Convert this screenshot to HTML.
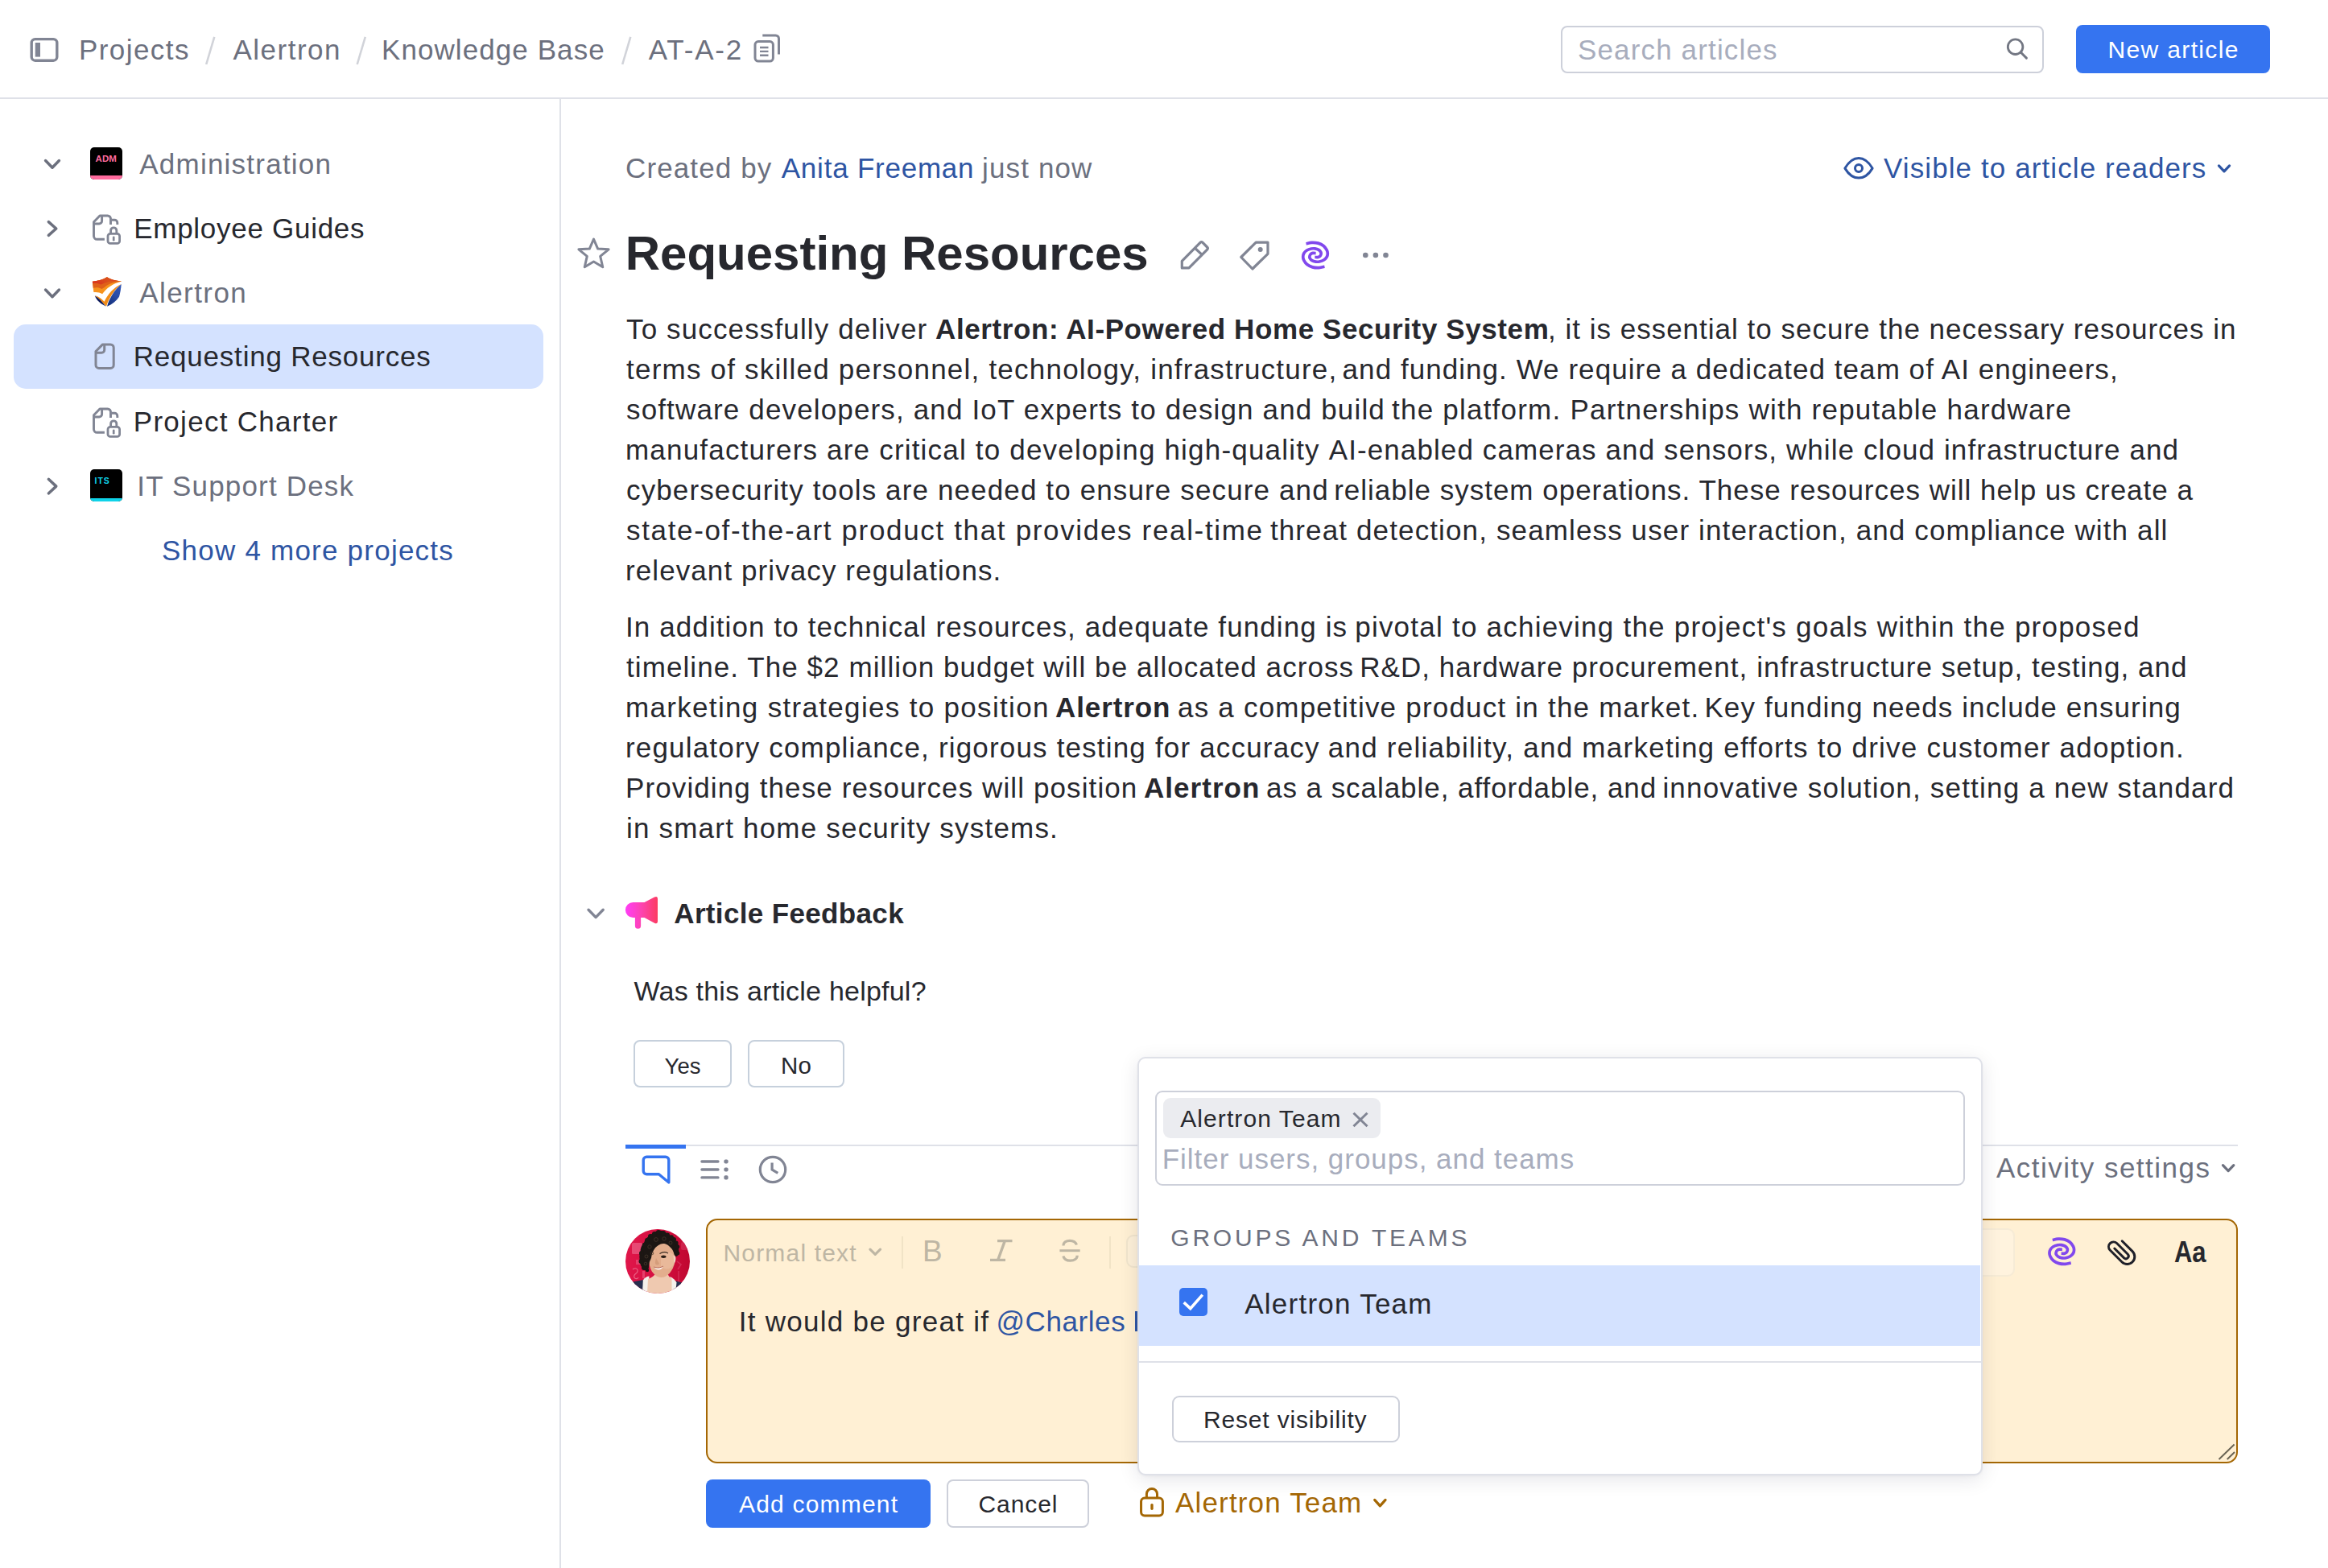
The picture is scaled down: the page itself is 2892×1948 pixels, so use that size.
<!DOCTYPE html>
<html lang="en"><head><meta charset="utf-8"><title>Requesting Resources</title><style>
html,body{margin:0;padding:0;background:#fff}
html{overflow:hidden}
body{width:2892px;height:1948px;position:relative;overflow:hidden;font-family:'Liberation Sans',sans-serif}
.t{position:absolute;white-space:nowrap;line-height:140px;height:140px;display:block}
.b{position:absolute;box-sizing:border-box}
svg{position:absolute;left:0;top:0;overflow:visible;pointer-events:none}
</style></head><body><div class="b" style="left:0px;top:121px;width:2892px;height:2px;background:#dfe1e8"></div>
<div class="b" style="left:695px;top:123px;width:2px;height:1825px;background:#dfe1e8"></div>
<div class="b" style="left:1939px;top:32px;width:600px;height:59px;border:2px solid #cdd0da;border-radius:8px;background:#fff"></div>
<div class="b" style="left:2579px;top:31px;width:241px;height:60px;background:#3574f0;border-radius:8px"></div>
<div class="b" style="left:17px;top:403px;width:658px;height:80px;background:#d4e2ff;border-radius:15px"></div>
<div class="b" style="left:112px;top:183px;width:40px;height:40px;background:#000;border-radius:5px;overflow:hidden"><div class="b" style="left:0px;top:35px;width:40px;height:6px;background:#ff6b9d"></div></div>
<div class="b" style="left:112px;top:583px;width:40px;height:40px;background:#000;border-radius:5px;overflow:hidden"><div class="b" style="left:0px;top:35.5px;width:40px;height:6px;background:#0fd3e9"></div></div>
<div class="b" style="left:787px;top:1292px;width:122px;height:59px;border:2px solid #c6d0dc;border-radius:8px;background:#fff"></div>
<div class="b" style="left:929px;top:1292px;width:120px;height:59px;border:2px solid #c6d0dc;border-radius:8px;background:#fff"></div>
<div class="b" style="left:777px;top:1422px;width:2003px;height:2px;background:#dfe1e8"></div>
<div class="b" style="left:777px;top:1422px;width:75px;height:5px;background:#3574f0"></div>
<div class="b" style="left:877px;top:1514px;width:1903px;height:304px;border:2px solid #a46704;border-radius:14px;background:#fff0d4"></div>
<div class="b" style="left:1120px;top:1536px;width:2px;height:40px;background:#f1e3c6"></div>
<div class="b" style="left:1378px;top:1536px;width:2px;height:40px;background:#f1e3c6"></div>
<div class="b" style="left:1399.4px;top:1534px;width:60px;height:41px;border:2px solid #f1e5cd;border-radius:9px;background:#fdf0d8"></div>
<div class="b" style="left:2300px;top:1526px;width:203px;height:59.5px;border:2px solid #f6ebd6;border-radius:9px;background:#fff3de"></div>
<div class="b" style="left:1409.5px;top:1628.5px;width:4px;height:25.5px;background:#2e55a3"></div>
<div class="b" style="left:877px;top:1838px;width:279px;height:60px;background:#3574f0;border-radius:8px"></div>
<div class="b" style="left:1176px;top:1838px;width:177px;height:60px;border:2px solid #cdd0da;border-radius:8px;background:#fff"></div>
<svg width="2892" height="1948" viewBox="0 0 2892 1948"><rect x="39.2" y="48.6" width="31.6" height="26.6" rx="4.5" fill="none" stroke="#818594" stroke-width="3.4"/><rect x="43.75" y="53" width="6.25" height="17.6" fill="#818594"/>
<path d="M266.3 45.8 L256.2 80" fill="none" stroke="#d1d3d9" stroke-width="2.6" stroke-linecap="butt" stroke-linejoin="round" />
<path d="M453.8 45.8 L443.7 80" fill="none" stroke="#d1d3d9" stroke-width="2.6" stroke-linecap="butt" stroke-linejoin="round" />
<path d="M783.3 45.8 L773.2 80" fill="none" stroke="#d1d3d9" stroke-width="2.6" stroke-linecap="butt" stroke-linejoin="round" />
<rect x="938" y="51.6" width="22.4" height="24.4" rx="4" fill="none" stroke="#818594" stroke-width="3"/>
<path d="M947.3 44 H963.5 a4 4 0 0 1 4 4 V67.5" fill="none" stroke="#818594" stroke-width="3" stroke-linecap="butt" stroke-linejoin="round" />
<path d="M944 59 H954.5 M944 63.9 H954.5 M944 68.8 H954.5" fill="none" stroke="#818594" stroke-width="2.4" stroke-linecap="butt" stroke-linejoin="round" />
<circle cx="2503.6" cy="58.2" r="9.3" fill="none" stroke="#737783" stroke-width="2.8"/><path d="M2510.3 65 L2517.4 72.1" fill="none" stroke="#737783" stroke-width="3" stroke-linecap="round" stroke-linejoin="round" />
<path d="M56.575 199.575 L65.0 208.2675 L73.425 199.575" fill="none" stroke="#6c707e" stroke-width="3.5" stroke-linecap="round" stroke-linejoin="round" />
<path d="M60.325 275.575 L69.7675 284.0 L60.325 292.425" fill="none" stroke="#6c707e" stroke-width="3.5" stroke-linecap="round" stroke-linejoin="round" />
<path d="M56.575 360.075 L65.0 368.7675 L73.425 360.075" fill="none" stroke="#6c707e" stroke-width="3.5" stroke-linecap="round" stroke-linejoin="round" />
<path d="M60.325 595.325 L69.7675 604.125 L60.325 612.925" fill="none" stroke="#6c707e" stroke-width="3.5" stroke-linecap="round" stroke-linejoin="round" />
<g transform="translate(105 255)" ><path d="M24.9 42.3 H15.5 a4 4 0 0 1 -4 -4 V20.7 L19 13 H28.7 a3.8 3.8 0 0 1 3.8 3.8 V23.9" fill="none" stroke="#818594" stroke-width="2.9" stroke-linecap="butt" stroke-linejoin="round" /><path d="M21.6 13 V19.5 a3.5 3.5 0 0 1 -3.5 3.5 H11.5" fill="none" stroke="#818594" stroke-width="2.9" stroke-linecap="butt" stroke-linejoin="round" /><path d="M33.5 18.3 H37.3 a3.5 3.5 0 0 1 3.5 3.5 V23.9" fill="none" stroke="#818594" stroke-width="2.9" stroke-linecap="butt" stroke-linejoin="round" /><rect x="29" y="35.3" width="14.6" height="12.1" rx="3" fill="none" stroke="#818594" stroke-width="2.8"/><path d="M32.6 35.3 V31.4 a3.6 3.6 0 0 1 7.2 0 V35.3" fill="none" stroke="#818594" stroke-width="2.8" stroke-linecap="butt" stroke-linejoin="round" /><path d="M36.2 39.8 V43.2" fill="none" stroke="#818594" stroke-width="2.7" stroke-linecap="round" stroke-linejoin="round" /></g>
<g transform="translate(105 415)" ><path d="M22.5 12.9 H32.2 a4 4 0 0 1 4 4 V38.4 a4 4 0 0 1 -4 4 H18 a4 4 0 0 1 -4 -4 V21.5 Z" fill="none" stroke="#818594" stroke-width="3" stroke-linecap="round" stroke-linejoin="round" /><path d="M24.7 12.9 V19.8 a3.5 3.5 0 0 1 -3.5 3.5 H14" fill="none" stroke="#818594" stroke-width="3" stroke-linecap="butt" stroke-linejoin="round" /></g>
<g transform="translate(105 495)" ><path d="M24.9 42.3 H15.5 a4 4 0 0 1 -4 -4 V20.7 L19 13 H28.7 a3.8 3.8 0 0 1 3.8 3.8 V23.9" fill="none" stroke="#818594" stroke-width="2.9" stroke-linecap="butt" stroke-linejoin="round" /><path d="M21.6 13 V19.5 a3.5 3.5 0 0 1 -3.5 3.5 H11.5" fill="none" stroke="#818594" stroke-width="2.9" stroke-linecap="butt" stroke-linejoin="round" /><path d="M33.5 18.3 H37.3 a3.5 3.5 0 0 1 3.5 3.5 V23.9" fill="none" stroke="#818594" stroke-width="2.9" stroke-linecap="butt" stroke-linejoin="round" /><rect x="29" y="35.3" width="14.6" height="12.1" rx="3" fill="none" stroke="#818594" stroke-width="2.8"/><path d="M32.6 35.3 V31.4 a3.6 3.6 0 0 1 7.2 0 V35.3" fill="none" stroke="#818594" stroke-width="2.8" stroke-linecap="butt" stroke-linejoin="round" /><path d="M36.2 39.8 V43.2" fill="none" stroke="#818594" stroke-width="2.7" stroke-linecap="round" stroke-linejoin="round" /></g>
<g transform="translate(114.4 344.1)" ><defs><linearGradient id="sgb" x1="0.9" y1="0" x2="0.3" y2="1"><stop offset="0" stop-color="#2f55b5"/><stop offset="0.5" stop-color="#2a4da8"/><stop offset="1" stop-color="#14307c"/></linearGradient>
    <linearGradient id="sgr" x1="0" y1="0.6" x2="1" y2="0.3"><stop offset="0" stop-color="#d9311f"/><stop offset="0.55" stop-color="#d9501c"/><stop offset="1" stop-color="#d93420"/></linearGradient>
    <clipPath id="scl"><path d="M0.3 5.6 C7 5.2 13 3.5 18.5 0.2 C23 3.2 29 4.8 36.6 5.4 C26 8 17.5 14 12.7 21.2 C9.5 19 5.5 18.5 2 19 Z"/></clipPath></defs><g clip-path="url(#scl)"><rect x="0" y="0" width="37" height="22" fill="#f7931d"/><path d="M0 0 H37 V6 C30 5.8 23 8 18.2 10.6 C16 12.5 14 14.2 11.9 14.9 C9 13 5 12.8 1 13.8 Z" fill="#df6119"/><path d="M0 0 H37 V5.2 C30 4.6 23 5.2 15.5 7.4 C13.5 8.4 12 9.2 10.7 9.5 C7.5 7.6 4 7.4 0 8 Z" fill="url(#sgr)"/></g><path d="M3.4 23 C8 24.2 12 27.5 15.2 30.6 C19.5 21 27 13 36.2 8.8 C27 16.5 21 26 17.6 36.6 C13 31.5 8 27 3.4 23 Z" fill="#f08c19"/><path d="M3.4 23.3 C8 26 12.5 30.5 16.8 36.3 C11 33.5 5.5 29 3.4 23.3 Z" fill="#0b185a"/><path d="M36.3 9 C35.8 15 35 20 33.6 24.6 C30 30 25 34 18.6 36.6 C21.5 26.5 27.5 16.5 36.3 9 Z" fill="url(#sgb)"/></g>
<g transform="translate(2280 180)" ><path d="M11.9 29.1 C17 20.5 23 16.6 29 16.6 S41 20.5 46.1 29.1 C41 37.5 35 41.1 29 41.1 S17 37.5 11.9 29.1 Z" fill="none" stroke="#2e55a3" stroke-width="3" stroke-linecap="round" stroke-linejoin="round" /><circle cx="29" cy="28.9" r="4.5" fill="none" stroke="#2e55a3" stroke-width="3"/></g>
<path d="M2756.44 205.94 L2763.0 212.916 L2769.56 205.94" fill="none" stroke="#2e55a3" stroke-width="3.2" stroke-linecap="round" stroke-linejoin="round" />
<g transform="translate(710 288)" ><path d="M27.5 9.1 L32.7 21.1 L46.1 21.8 L35.7 30.4 L38.75 43.75 L27.5 37 L16.25 43.75 L19.3 30.4 L8.9 21.8 L22.3 21.1 Z" fill="none" stroke="#818594" stroke-width="3" stroke-linecap="round" stroke-linejoin="round" /></g>
<g transform="translate(1450 285)" ><path d="M18.3 47.9 H27 L49.6 25.1 a2.2 2.2 0 0 0 0 -3.1 L44.1 16.4 a2.2 2.2 0 0 0 -3.1 0 L18.3 39.3 Z M35.8 24.5 L42.3 30.7" fill="none" stroke="#818594" stroke-width="3.2" stroke-linecap="round" stroke-linejoin="round" /></g>
<g transform="translate(1450 285)" ><path d="M110.2 16.1 H125 V30.3 L105.9 49 L91.75 34.5 Z" fill="none" stroke="#818594" stroke-width="3.2" stroke-linecap="round" stroke-linejoin="round" /><circle cx="115.7" cy="24.9" r="3" fill="#818594"/></g>
<g transform="translate(1634 317)" ><path d="M-11.48 -14.23 C-10.31 -14.46 -6.94 -15.51 -4.44 -15.61 C-1.94 -15.71 1.07 -15.53 3.52 -14.85 C5.97 -14.16 8.47 -12.91 10.25 -11.48 C12.04 -10.05 13.39 -7.86 14.23 -6.27 C15.07 -4.69 15.30 -3.42 15.30 -1.99 C15.30 -0.56 15.02 0.97 14.23 2.30 C13.44 3.62 12.09 5.02 10.56 5.97 C9.03 6.91 6.73 7.60 5.05 7.96 C3.37 8.32 1.99 8.34 0.46 8.11 C-1.07 7.88 -2.91 7.35 -4.13 6.58 C-5.36 5.82 -6.40 4.44 -6.89 3.52 C-7.37 2.60 -7.24 1.89 -7.04 1.07 C-6.84 0.26 -6.35 -0.77 -5.66 -1.38 C-4.97 -1.99 -3.95 -2.42 -2.91 -2.60 C-1.86 -2.78 0.03 -2.47 0.61 -2.45" fill="none" stroke="#8148ed" stroke-width="3.7" stroke-linecap="butt" stroke-linejoin="round" /><g transform="rotate(180)"><path d="M-11.48 -14.23 C-10.31 -14.46 -6.94 -15.51 -4.44 -15.61 C-1.94 -15.71 1.07 -15.53 3.52 -14.85 C5.97 -14.16 8.47 -12.91 10.25 -11.48 C12.04 -10.05 13.39 -7.86 14.23 -6.27 C15.07 -4.69 15.30 -3.42 15.30 -1.99 C15.30 -0.56 15.02 0.97 14.23 2.30 C13.44 3.62 12.09 5.02 10.56 5.97 C9.03 6.91 6.73 7.60 5.05 7.96 C3.37 8.32 1.99 8.34 0.46 8.11 C-1.07 7.88 -2.91 7.35 -4.13 6.58 C-5.36 5.82 -6.40 4.44 -6.89 3.52 C-7.37 2.60 -7.24 1.89 -7.04 1.07 C-6.84 0.26 -6.35 -0.77 -5.66 -1.38 C-4.97 -1.99 -3.95 -2.42 -2.91 -2.60 C-1.86 -2.78 0.03 -2.47 0.61 -2.45" fill="none" stroke="#8148ed" stroke-width="3.7" stroke-linecap="butt" stroke-linejoin="round" /></g></g>
<circle cx="1696.3" cy="317" r="3.3" fill="#818594"/>
<circle cx="1708.9" cy="317" r="3.3" fill="#818594"/>
<circle cx="1721.5" cy="317" r="3.3" fill="#818594"/>
<path d="M731.03 1130.28 L740.125 1139.567 L749.22 1130.28" fill="none" stroke="#818594" stroke-width="3.4" stroke-linecap="round" stroke-linejoin="round" />
<defs><linearGradient id="mg" x1="0" y1="0" x2="1" y2="0"><stop offset="0" stop-color="#ff3df7"/><stop offset="0.5" stop-color="#fd43b0"/><stop offset="1" stop-color="#fc3c62"/></linearGradient></defs>
<g transform="translate(768 1104)" ><path d="M18.4 17 H32.5 L45 10.6 Q49 8.8 49 13 V40.3 Q49 44.5 45 42.7 L32.5 36 H28.1 V46.2 a3.6 3.6 0 0 1 -7.2 0 V36 H18.4 A9.5 9.5 0 0 1 18.4 17 Z" fill="url(#mg)"/></g>
<path d="M803.25 1437.2 H826.8 a4 4 0 0 1 4 4 V1469 L818.4 1458.8 H803.25 a4 4 0 0 1 -4 -4 V1441.2 a4 4 0 0 1 4 -4 Z" fill="none" stroke="#3574f0" stroke-width="3.4" stroke-linecap="round" stroke-linejoin="round" />
<path d="M871.9 1443 H892 M871.9 1453 H892 M871.9 1462.9 H892" fill="none" stroke="#818594" stroke-width="3.3" stroke-linecap="round" stroke-linejoin="round" />
<rect x="899.4" y="1440.4" width="5.2" height="5.2" rx="1.8" fill="#818594"/>
<rect x="899.4" y="1450.4" width="5.2" height="5.2" rx="1.8" fill="#818594"/>
<rect x="899.4" y="1460.3000000000002" width="5.2" height="5.2" rx="1.8" fill="#818594"/>
<circle cx="960" cy="1453" r="15.7" fill="none" stroke="#818594" stroke-width="3.2"/><path d="M959.1 1444.4 V1453 L966.3 1457.3" fill="none" stroke="#818594" stroke-width="3.2" stroke-linecap="butt" stroke-linejoin="miter" />
<path d="M2761.44 1447.69 L2768.125 1454.666 L2774.81 1447.69" fill="none" stroke="#6c707e" stroke-width="3.2" stroke-linecap="round" stroke-linejoin="round" />
<g transform="translate(777 1527)" ><defs><clipPath id="avc"><circle cx="40" cy="40" r="40"/></clipPath><linearGradient id="avbg" x1="0" y1="0" x2="1" y2="0"><stop offset="0" stop-color="#e0164a"/><stop offset="0.6" stop-color="#d30d3e"/><stop offset="1" stop-color="#bf0830"/></linearGradient></defs><g clip-path="url(#avc)"><rect x="0" y="0" width="80" height="80" fill="url(#avbg)"/><rect x="8" y="17" width="13" height="14" rx="1.5" fill="#e9537c" opacity="0.85"/><rect x="13" y="38" width="6" height="6" fill="#e65179" opacity="0.7"/><path d="M9 50 C14 46 18 52 12 56 C8 60 14 64 16 60" fill="none" stroke="#ee7a98" stroke-width="1.1" opacity="0.8"/><rect x="21" y="52" width="3" height="9" fill="#e9537c" opacity="0.7"/><rect x="69" y="16" width="8" height="10" rx="2" fill="#cf2a52" opacity="0.8"/><path d="M64 40 l5 4 l-4 6 M66 52 v14" stroke="#d6345c" stroke-width="1.6" fill="none" opacity="0.8"/><path d="M6 66 L22 63 L24 80 L0 80 Z" fill="#27304f"/><path d="M63 64.5 L72 67 L80 80 L58 80 Z" fill="#27304f"/><path d="M21.8 63.5 C24 60 27 58.8 29.5 58.6 L28 80 L21 80 Z" fill="#f4f1ec"/><path d="M55.5 59 C59 60.5 62 63.5 63.5 66.5 L62 80 L56.5 80 Z" fill="#f4f1ec"/><path d="M28 62 C33 60 36 58 38 54 L52 54 C53 58 55 60 57.5 61.5 L57.5 80 L27 80 Z" fill="#efc9b0"/><path d="M30 30 C34 18 46 12 57 17 C61 24 62.5 34 61.5 40 C60.5 46 58 51 55 54.5 C52 58 48.5 60 44.5 60 C39 60 34.5 56 31.5 50 C29 44 28.5 36 30 30 Z" fill="#e3ae8d"/><path d="M44 30 C50 27 56 28 60 32 C61 36 61 40 60 44 C56 50 50 52 44 46 Z" fill="#ebbd9f" opacity="0.7"/><path d="M59.5 33 C63 32 63.5 38 60.5 43 Z" fill="#f0d2c0"/><ellipse cx="47.3" cy="34.3" rx="3.2" ry="1.7" fill="#2b1d15"/><path d="M42.5 30.5 C46 28.3 50 28.3 53 30" stroke="#3a2a20" stroke-width="1.1" fill="none"/><path d="M38 36 C37 40 36 43 38.5 44.2 C40 44.6 41.5 44 42 43" fill="#cf9877" opacity="0.8"/><path d="M35.5 47.3 C39 48.8 43 48.6 46.6 46.4 C45 51.2 38.5 52.2 35.5 47.3 Z" fill="#fdf6f2"/><path d="M35.2 47 C39 48.6 43 48.4 47 46" stroke="#a8564a" stroke-width="0.8" fill="none"/><path d="M41 2 C46 1 50 4 53.7 6.7 C58 8.5 61 11 62 14.3 C65 17 66.3 20 65.8 23.3 C66.8 27 66.3 30 65 32.5 C63.5 35 62 34 60.5 31.5 C59.5 27 58 25 56.3 23.3 C54 20.5 52 19 49.2 18.2 C46 17.6 43.5 18.3 41 20 C38 21.8 36 24 34.6 27 C33 30 32.5 32.5 32.2 35 C31.5 37.5 30.5 39 29.8 41 C29.3 43.5 29.2 45.5 29 47.5 C28.5 50 27.2 51.5 25.6 51.3 C22.5 51.5 21 50 20.5 47.5 C18.5 45 17.8 42 18 38.6 C16.8 35 17.3 31.5 18.6 28.4 C18.2 24 20 20 23 17 C24 12.5 27 9.5 30.7 8 C33.5 4.5 37 2.6 41 2 Z" fill="#1c1613"/><circle cx="24" cy="20" r="3.2" fill="#1c1613"/><circle cx="20" cy="30" r="3" fill="#1c1613"/><circle cx="19.5" cy="40" r="3" fill="#1c1613"/><circle cx="23" cy="48" r="3" fill="#1c1613"/><circle cx="31" cy="9" r="3" fill="#1c1613"/><circle cx="41" cy="4" r="3" fill="#1c1613"/><circle cx="52" cy="7.5" r="3" fill="#1c1613"/><circle cx="60" cy="13" r="3" fill="#1c1613"/><circle cx="64.5" cy="22" r="2.8" fill="#1c1613"/><circle cx="65" cy="30" r="2.4" fill="#1c1613"/><circle cx="27" cy="14" r="3" fill="#1c1613"/><circle cx="36" cy="6" r="3" fill="#1c1613"/><circle cx="47" cy="5" r="3" fill="#1c1613"/><circle cx="57" cy="10" r="2.8" fill="#1c1613"/><circle cx="63" cy="17" r="2.6" fill="#1c1613"/><circle cx="27" cy="51" r="2.2" fill="#1c1613"/><circle cx="30" cy="22" r="2.2" fill="none" stroke="#4a3a30" stroke-width="0.9" opacity="0.8"/><circle cx="38" cy="13" r="2.4" fill="none" stroke="#4a3a30" stroke-width="0.9" opacity="0.8"/><circle cx="48" cy="12" r="2.2" fill="none" stroke="#4a3a30" stroke-width="0.9" opacity="0.8"/><circle cx="26" cy="34" r="2" fill="none" stroke="#4a3a30" stroke-width="0.9" opacity="0.8"/><circle cx="56" cy="17" r="2" fill="none" stroke="#4a3a30" stroke-width="0.9" opacity="0.8"/><circle cx="33" cy="30" r="1.8" fill="none" stroke="#4a3a30" stroke-width="0.9" opacity="0.8"/><circle cx="25" cy="43" r="1.8" fill="none" stroke="#4a3a30" stroke-width="0.9" opacity="0.8"/></g></g>
<path d="M1080.94 1552.19 L1087.25 1558.416 L1093.56 1552.19" fill="none" stroke="#beb6a4" stroke-width="3.2" stroke-linecap="round" stroke-linejoin="round" />
<path d="M1239 1541.6 H1257.5 M1230 1565.4 H1249 M1248.3 1541.6 L1239.7 1565.4" fill="none" stroke="#beb6a4" stroke-width="3.4" stroke-linecap="butt" stroke-linejoin="round" />
<path d="M1337.5 1546.5 C1336 1542.5 1332.5 1541.3 1329 1541.3 C1324.5 1541.3 1321 1543.5 1321 1547.5 M1320.8 1560.5 C1322 1564.5 1325.5 1566.2 1329.5 1566.2 C1334.5 1566.2 1338.2 1563.8 1338.2 1559.8" fill="none" stroke="#beb6a4" stroke-width="3.2" stroke-linecap="butt" stroke-linejoin="round" /><path d="M1316.4 1553.7 H1341.7" fill="none" stroke="#beb6a4" stroke-width="3" stroke-linecap="butt" stroke-linejoin="round" />
<g transform="translate(2561.25 1554.75)" ><path d="M-11.48 -14.23 C-10.31 -14.46 -6.94 -15.51 -4.44 -15.61 C-1.94 -15.71 1.07 -15.53 3.52 -14.85 C5.97 -14.16 8.47 -12.91 10.25 -11.48 C12.04 -10.05 13.39 -7.86 14.23 -6.27 C15.07 -4.69 15.30 -3.42 15.30 -1.99 C15.30 -0.56 15.02 0.97 14.23 2.30 C13.44 3.62 12.09 5.02 10.56 5.97 C9.03 6.91 6.73 7.60 5.05 7.96 C3.37 8.32 1.99 8.34 0.46 8.11 C-1.07 7.88 -2.91 7.35 -4.13 6.58 C-5.36 5.82 -6.40 4.44 -6.89 3.52 C-7.37 2.60 -7.24 1.89 -7.04 1.07 C-6.84 0.26 -6.35 -0.77 -5.66 -1.38 C-4.97 -1.99 -3.95 -2.42 -2.91 -2.60 C-1.86 -2.78 0.03 -2.47 0.61 -2.45" fill="none" stroke="#8148ed" stroke-width="3.7" stroke-linecap="butt" stroke-linejoin="round" /><g transform="rotate(180)"><path d="M-11.48 -14.23 C-10.31 -14.46 -6.94 -15.51 -4.44 -15.61 C-1.94 -15.71 1.07 -15.53 3.52 -14.85 C5.97 -14.16 8.47 -12.91 10.25 -11.48 C12.04 -10.05 13.39 -7.86 14.23 -6.27 C15.07 -4.69 15.30 -3.42 15.30 -1.99 C15.30 -0.56 15.02 0.97 14.23 2.30 C13.44 3.62 12.09 5.02 10.56 5.97 C9.03 6.91 6.73 7.60 5.05 7.96 C3.37 8.32 1.99 8.34 0.46 8.11 C-1.07 7.88 -2.91 7.35 -4.13 6.58 C-5.36 5.82 -6.40 4.44 -6.89 3.52 C-7.37 2.60 -7.24 1.89 -7.04 1.07 C-6.84 0.26 -6.35 -0.77 -5.66 -1.38 C-4.97 -1.99 -3.95 -2.42 -2.91 -2.60 C-1.86 -2.78 0.03 -2.47 0.61 -2.45" fill="none" stroke="#8148ed" stroke-width="3.7" stroke-linecap="butt" stroke-linejoin="round" /></g></g>
<g transform="translate(2606 1526)" ><path d="M30.18 15.72 L43.08 28.62 A9.3 9.3 0 0 1 29.92 41.78 L15.15 26.99 A6 6 0 0 1 23.63 18.51 L37.35 32.23 A3.3 3.3 0 0 1 32.69 36.89 L20.79 24.99" fill="none" stroke="#1f2029" stroke-width="3" stroke-linecap="round" stroke-linejoin="round" /></g>
<path d="M2756.5 1813 L2775.6 1794.5 M2766.7 1813 L2776 1804" fill="none" stroke="#6b6555" stroke-width="2" stroke-linecap="butt" stroke-linejoin="round" />
<g transform="translate(1404 1838)" ><rect x="13.55" y="22.9" width="26.85" height="22.1" rx="4.4" fill="none" stroke="#a46704" stroke-width="3"/><path d="M20.4 22.9 V18 a6.55 6.55 0 0 1 13.1 0 V22.9" fill="none" stroke="#a46704" stroke-width="3" stroke-linecap="butt" stroke-linejoin="round" /><path d="M27 31.6 V36.3" fill="none" stroke="#a46704" stroke-width="3.3" stroke-linecap="round" stroke-linejoin="round" /></g>
<path d="M1707.69 1863.44 L1714.375 1870.916 L1721.06 1863.44" fill="none" stroke="#a46704" stroke-width="3.2" stroke-linecap="round" stroke-linejoin="round" /></svg>
<span class="t" style="left:98px;top:-8.4px;font-size:35px;letter-spacing:1.429px;color:#6c707e;">Projects</span>
<span class="t" style="left:289.5px;top:-8.4px;font-size:35px;letter-spacing:1.5px;color:#6c707e;">Alertron</span>
<span class="t" style="left:474px;top:-8.4px;font-size:35px;letter-spacing:1.077px;color:#6c707e;">Knowledge Base</span>
<span class="t" style="left:805.75px;top:-8.4px;font-size:35px;letter-spacing:1.85px;color:#6c707e;">AT-A-2</span>
<span class="t" style="left:1960px;top:-8.4px;font-size:35px;letter-spacing:1.143px;color:#a8adbd;">Search articles</span>
<span class="t" style="left:2618.6px;top:-8px;font-size:30px;letter-spacing:1.34px;color:#ffffff;">New article</span>
<span class="t" style="left:173.25px;top:133.5px;font-size:35px;letter-spacing:1.231px;color:#6c707e;">Administration</span>
<span class="t" style="left:166.25px;top:213.6px;font-size:35px;letter-spacing:0.714px;color:#27282e;">Employee Guides</span>
<span class="t" style="left:173.25px;top:293.5px;font-size:35px;letter-spacing:1.429px;color:#6c707e;">Alertron</span>
<span class="t" style="left:165.75px;top:373.3px;font-size:35px;letter-spacing:0.789px;color:#27282e;">Requesting Resources</span>
<span class="t" style="left:165.75px;top:453.5px;font-size:35px;letter-spacing:1.286px;color:#27282e;">Project Charter</span>
<span class="t" style="left:170.25px;top:533.5px;font-size:35px;letter-spacing:1.179px;color:#6c707e;">IT Support Desk</span>
<span class="t" style="left:201px;top:613.5px;font-size:35px;letter-spacing:1.224px;color:#2e55a3;">Show 4 more projects</span>
<span class="t" style="left:118.5px;top:127.25px;font-size:11.5px;font-weight:700;letter-spacing:0.125px;color:#ff6b9d;">ADM</span>
<span class="t" style="left:117.5px;top:526.75px;font-size:10.5px;font-weight:700;letter-spacing:1.0px;color:#0fd3e9;">ITS</span>
<span class="t" style="left:777px;top:139.2px;font-size:35px;letter-spacing:1.111px;color:#6c707e;">Created by</span>
<span class="t" style="left:970.75px;top:139.2px;font-size:35px;letter-spacing:0.771px;color:#2e55a3;">Anita Freeman</span>
<span class="t" style="left:1220px;top:139.2px;font-size:35px;letter-spacing:1.143px;color:#6c707e;">just now</span>
<span class="t" style="left:2340px;top:139.2px;font-size:35px;letter-spacing:1.1px;color:#2e55a3;">Visible to article readers</span>
<span class="t" style="left:776.75px;top:245px;font-size:60px;font-weight:700;letter-spacing:-0.013px;color:#27282e;">Requesting Resources</span>
<span class="t" style="left:778px;top:338.75px;font-size:35px;letter-spacing:1.136px;color:#27282e;">To successfully deliver</span>
<span class="t" style="left:1162px;top:338.75px;font-size:35px;font-weight:700;letter-spacing:0.6px;color:#27282e;">Alertron: AI-Powered Home Security System</span>
<span class="t" style="left:1923px;top:338.75px;font-size:35px;letter-spacing:1.0px;color:#27282e;">, it is essential to secure the necessary resources in</span>
<span class="t" style="left:778px;top:388.75px;font-size:35px;letter-spacing:1.219px;color:#27282e;">terms of skilled personnel, technology, infrastructure,</span>
<span class="t" style="left:1667.6px;top:388.75px;font-size:35px;letter-spacing:1.052px;color:#27282e;">and funding. We require a dedicated team of AI engineers,</span>
<span class="t" style="left:778px;top:438.75px;font-size:35px;letter-spacing:1.145px;color:#27282e;">software developers, and IoT experts to design and build</span>
<span class="t" style="left:1729px;top:438.75px;font-size:35px;letter-spacing:1.224px;color:#27282e;">the platform. Partnerships with reputable hardware</span>
<span class="t" style="left:777px;top:488.75px;font-size:35px;letter-spacing:1.192px;color:#27282e;">manufacturers are critical to developing high-quality</span>
<span class="t" style="left:1650.7px;top:488.75px;font-size:35px;letter-spacing:1.099px;color:#27282e;">AI-enabled cameras and sensors, while cloud infrastructure and</span>
<span class="t" style="left:778px;top:538.75px;font-size:35px;letter-spacing:1.128px;color:#27282e;">cybersecurity tools are needed to ensure secure and</span>
<span class="t" style="left:1657.2px;top:538.75px;font-size:35px;letter-spacing:0.993px;color:#27282e;">reliable system operations. These resources will help us create a</span>
<span class="t" style="left:778px;top:588.75px;font-size:35px;letter-spacing:1.66px;color:#27282e;">state-of-the-art product that provides real-time</span>
<span class="t" style="left:1577.9px;top:588.75px;font-size:35px;letter-spacing:1.128px;color:#27282e;">threat detection, seamless user interaction, and compliance with all</span>
<span class="t" style="left:777px;top:638.75px;font-size:35px;letter-spacing:1.089px;color:#27282e;">relevant privacy regulations.</span>
<span class="t" style="left:777px;top:708.75px;font-size:35px;letter-spacing:1.1px;color:#27282e;">In addition to technical resources, adequate funding is</span>
<span class="t" style="left:1683.2px;top:708.75px;font-size:35px;letter-spacing:1.23px;color:#27282e;">pivotal to achieving the project's goals within the proposed</span>
<span class="t" style="left:778px;top:758.75px;font-size:35px;letter-spacing:1.08px;color:#27282e;">timeline. The $2 million budget will be allocated across</span>
<span class="t" style="left:1689.2px;top:758.75px;font-size:35px;letter-spacing:1.038px;color:#27282e;">R&amp;D, hardware procurement, infrastructure setup, testing, and</span>
<span class="t" style="left:777px;top:808.75px;font-size:35px;letter-spacing:1.323px;color:#27282e;">marketing strategies to position</span>
<span class="t" style="left:1311px;top:808.75px;font-size:35px;font-weight:700;letter-spacing:0.9px;color:#27282e;">Alertron</span>
<span class="t" style="left:1463px;top:808.75px;font-size:35px;letter-spacing:1.211px;color:#27282e;">as a competitive product in the market.</span>
<span class="t" style="left:2117.4px;top:808.75px;font-size:35px;letter-spacing:1.117px;color:#27282e;">Key funding needs include ensuring</span>
<span class="t" style="left:777px;top:858.75px;font-size:35px;letter-spacing:1.176px;color:#27282e;">regulatory compliance, rigorous testing for accuracy</span>
<span class="t" style="left:1649.7px;top:858.75px;font-size:35px;letter-spacing:1.258px;color:#27282e;">and reliability, and marketing efforts to drive customer adoption.</span>
<span class="t" style="left:777px;top:908.75px;font-size:35px;letter-spacing:1.105px;color:#27282e;">Providing these resources will position</span>
<span class="t" style="left:1421px;top:908.75px;font-size:35px;font-weight:700;letter-spacing:1.043px;color:#27282e;">Alertron</span>
<span class="t" style="left:1573px;top:908.75px;font-size:35px;letter-spacing:0.952px;color:#27282e;">as a scalable, affordable, and</span>
<span class="t" style="left:2065.4px;top:908.75px;font-size:35px;letter-spacing:1.193px;color:#27282e;">innovative solution, setting a new standard</span>
<span class="t" style="left:778px;top:958.75px;font-size:35px;letter-spacing:1.2px;color:#27282e;">in smart home security systems.</span>
<span class="t" style="left:837.25px;top:1065px;font-size:35px;font-weight:700;letter-spacing:0.35px;color:#27282e;">Article Feedback</span>
<span class="t" style="left:787.5px;top:1160.5px;font-size:34px;letter-spacing:0.219px;color:#27282e;">Was this article helpful?</span>
<span class="t" style="left:825.62px;top:1254.75px;font-size:27.5px;letter-spacing:0px;color:#27282e;/*fixls*/">Yes</span>
<span class="t" style="left:970.12px;top:1253.75px;font-size:29.5px;letter-spacing:0px;color:#27282e;/*fixls*/">No</span>
<span class="t" style="left:2480px;top:1380.5px;font-size:35px;letter-spacing:1.484px;color:#6c707e;">Activity settings</span>
<span class="t" style="left:898.5px;top:1487px;font-size:30px;letter-spacing:1.175px;color:#beb6a4;">Normal text</span>
<span class="t" style="left:1146px;top:1485px;font-size:37px;letter-spacing:0px;color:#beb6a4;">B</span>
<span class="t" style="left:917.75px;top:1571.75px;font-size:35px;letter-spacing:1.276px;color:#27282e;">It would be great if</span>
<span class="t" style="left:1237.5px;top:1571.75px;font-size:35px;letter-spacing:0.571px;color:#2e55a3;">@Charles</span>
<span class="t" style="left:2701.0px;top:1485.5px;font-size:36px;font-weight:700;letter-spacing:0px;color:#27282e;transform:scaleX(.86);transform-origin:0 0;/*fixls*/">Aa</span>
<span class="t" style="left:918px;top:1798.75px;font-size:30px;letter-spacing:1.2px;color:#ffffff;">Add comment</span>
<span class="t" style="left:1215.5px;top:1798.75px;font-size:30px;letter-spacing:0.9px;color:#27282e;">Cancel</span>
<span class="t" style="left:1460px;top:1796.6px;font-size:35px;letter-spacing:1.167px;color:#a46704;">Alertron Team</span>
<div class="b" style="left:1413px;top:1313px;width:1049.5px;height:520px;border:2px solid #dfe1e8;border-radius:10px;background:#fff;box-shadow:0 5px 25px rgba(10,14,50,0.105), 0 1px 3px rgba(10,14,50,0.04)"></div>
<div class="b" style="left:1435px;top:1355px;width:1005.5px;height:118px;border:2px solid #cdd0da;border-radius:9px;background:#fff"></div>
<div class="b" style="left:1445px;top:1364px;width:270px;height:50px;background:#ebecf0;border-radius:9px"></div>
<div class="b" style="left:1415px;top:1572px;width:1045px;height:100px;background:#d4e2ff"></div>
<div class="b" style="left:1465px;top:1600px;width:35px;height:35px;background:#3574f0;border-radius:5px"></div>
<div class="b" style="left:1415px;top:1691px;width:1045.5px;height:2px;background:#dfe1e8"></div>
<div class="b" style="left:1455.5px;top:1734px;width:283.5px;height:58px;border:2px solid #cdd0da;border-radius:9px;background:#fff"></div>
<svg width="2892" height="1948" viewBox="0 0 2892 1948"><path d="M1681.5 1382.7 L1698.5 1399.3 M1698.5 1382.7 L1681.5 1399.3" fill="none" stroke="#818594" stroke-width="3" stroke-linecap="butt" stroke-linejoin="round" />
<path d="M1470.7 1618.2 L1478.8 1625.6 L1493.8 1608.6" fill="none" stroke="#fff" stroke-width="3.6" stroke-linecap="butt" stroke-linejoin="miter" /></svg>
<span class="t" style="left:1466.25px;top:1320px;font-size:30px;letter-spacing:1.083px;color:#27282e;">Alertron Team</span>
<span class="t" style="left:1443.75px;top:1370.25px;font-size:35px;letter-spacing:0.967px;color:#a8adbd;">Filter users, groups, and teams</span>
<span class="t" style="left:1454.25px;top:1468px;font-size:30px;letter-spacing:3.8px;color:#6c707e;">GROUPS AND TEAMS</span>
<span class="t" style="left:1546.25px;top:1550px;font-size:35px;letter-spacing:1.25px;color:#27282e;">Alertron Team</span>
<span class="t" style="left:1495px;top:1693.75px;font-size:30px;letter-spacing:0.833px;color:#27282e;">Reset visibility</span></body></html>
